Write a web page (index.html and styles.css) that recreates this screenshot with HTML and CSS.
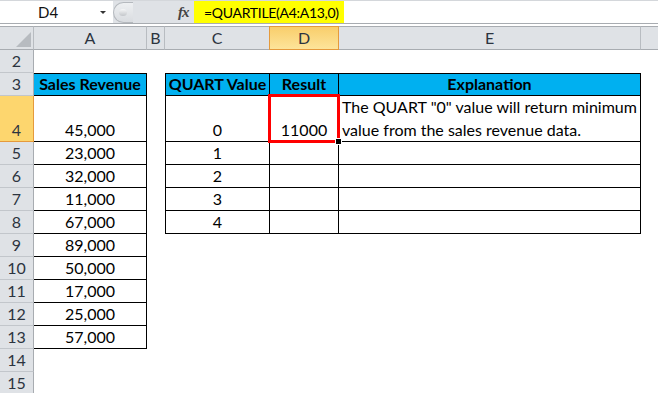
FILE: index.html
```html
<!DOCTYPE html>
<html lang="en">
<head>
  <meta charset="UTF-8" />
  <title>QUARTILE example</title>
  <link rel="stylesheet" href="styles.css">
</head>
<body>
  <div class="formula-bar">
    <div class="name-box">
      <span class="cell-ref">D4</span>
      <span class="drop-arrow"></span>
    </div>
    <div class="fx-zone">
      <span class="grip"><span class="grip-dot"></span></span>
      <span class="fx">fx</span>
    </div>
    <div class="formula">=QUARTILE(A4:A13,0)</div>
    <div class="formula-rest"></div>
  </div>
  <div class="bar-gap"></div>

  <div class="sheet">
    <!-- column headers -->
    <div class="col-head corner"><span class="corner-tri"></span></div>
    <div class="col-head">A</div>
    <div class="col-head">B</div>
    <div class="col-head">C</div>
    <div class="col-head active">D</div>
    <div class="col-head">E</div>
    <div class="col-head last"></div>

    <!-- row 2 -->
    <div class="row-head">2</div>
    <div class="cell"></div><div class="cell"></div><div class="cell"></div>
    <div class="cell"></div><div class="cell"></div><div class="cell"></div>

    <!-- row 3 -->
    <div class="row-head">3</div>
    <div class="cell th bt br bb">Sales Revenue</div>
    <div class="cell"></div>
    <div class="cell th bt bl br bb">QUART Value</div>
    <div class="cell th bt br bb">Result</div>
    <div class="cell th bt br bb">Explanation</div>
    <div class="cell"></div>

    <!-- row 4 -->
    <div class="row-head active">4</div>
    <div class="cell num br bb">45,000</div>
    <div class="cell"></div>
    <div class="cell num bl br bb">0</div>
    <div class="cell num br bb selected">11000</div>
    <div class="cell text br bb">The QUART "0" value will return minimum<br>value from the sales revenue data.</div>
    <div class="cell"></div>

    <div class="row-head">5</div>
    <div class="cell num br bb">23,000</div>
    <div class="cell"></div>
    <div class="cell num bl br bb">1</div>
    <div class="cell br bb"></div>
    <div class="cell br bb"></div>
    <div class="cell"></div>

    <div class="row-head">6</div>
    <div class="cell num br bb">32,000</div>
    <div class="cell"></div>
    <div class="cell num bl br bb">2</div>
    <div class="cell br bb"></div>
    <div class="cell br bb"></div>
    <div class="cell"></div>

    <div class="row-head">7</div>
    <div class="cell num br bb">11,000</div>
    <div class="cell"></div>
    <div class="cell num bl br bb">3</div>
    <div class="cell br bb"></div>
    <div class="cell br bb"></div>
    <div class="cell"></div>

    <div class="row-head">8</div>
    <div class="cell num br bb">67,000</div>
    <div class="cell"></div>
    <div class="cell num bl br bb">4</div>
    <div class="cell br bb"></div>
    <div class="cell br bb"></div>
    <div class="cell"></div>

    <div class="row-head">9</div>
    <div class="cell num br bb">89,000</div>
    <div class="cell"></div><div class="cell"></div><div class="cell"></div><div class="cell"></div><div class="cell"></div>

    <div class="row-head">10</div>
    <div class="cell num br bb">50,000</div>
    <div class="cell"></div><div class="cell"></div><div class="cell"></div><div class="cell"></div><div class="cell"></div>

    <div class="row-head">11</div>
    <div class="cell num br bb">17,000</div>
    <div class="cell"></div><div class="cell"></div><div class="cell"></div><div class="cell"></div><div class="cell"></div>

    <div class="row-head">12</div>
    <div class="cell num br bb">25,000</div>
    <div class="cell"></div><div class="cell"></div><div class="cell"></div><div class="cell"></div><div class="cell"></div>

    <div class="row-head">13</div>
    <div class="cell num br bb">57,000</div>
    <div class="cell"></div><div class="cell"></div><div class="cell"></div><div class="cell"></div><div class="cell"></div>

    <div class="row-head">14</div>
    <div class="cell"></div><div class="cell"></div><div class="cell"></div>
    <div class="cell"></div><div class="cell"></div><div class="cell"></div>

    <div class="row-head">15</div>
    <div class="cell"></div><div class="cell"></div><div class="cell"></div>
    <div class="cell"></div><div class="cell"></div><div class="cell"></div>
  </div>
</body>
</html>
```

FILE: styles.css
```css
* {
  box-sizing: border-box;
}
body {
  margin: 0;
  width: 658px;
  height: 393px;
  overflow: hidden;
  background: #fff;
  font-family: Lato, "Liberation Sans", sans-serif;
  font-size: 16px;
  color: #000;
}

/* formula bar */
.formula-bar {
  display: flex;
  height: 24px;
  border-top: 1px solid #d4d7db;
  border-bottom: 1px solid #a8acb1;
}
.name-box {
  width: 113px;
  flex-shrink: 0;
  display: flex;
  align-items: center;
  background: #fff;
}
.cell-ref {
  margin-left: 38px;
  width: 56px;
  font-size: 15px;
  color: #111;
}
.drop-arrow {
  width: 0;
  height: 0;
  border-left: 3px solid transparent;
  border-right: 3px solid transparent;
  border-top: 3px solid #333;
  margin-left: 6px;
}
.fx-zone {
  width: 81px;
  flex-shrink: 0;
  display: flex;
  align-items: center;
  background: #dfe2e6;
}
.grip {
  width: 20px;
  height: 21px;
  border: 1px solid #b5b9be;
  border-right: none;
  border-radius: 11px 0 0 11px;
  background: linear-gradient(#eef0f2, #d9dce0);
  display: flex;
  align-items: center;
  padding-left: 5px;
}
.grip-dot {
  width: 8px;
  height: 7px;
  border-radius: 50%;
  background: linear-gradient(#f6f7f8, #c3c6ca);
}
.fx {
  margin-left: 45px;
  font-family: "Liberation Serif", serif;
  font-style: italic;
  font-weight: bold;
  font-size: 15px;
  color: #444;
  letter-spacing: -1px;
}
.formula {
  width: 150px;
  flex-shrink: 0;
  background: #ffff00;
  padding-left: 10px;
  font-size: 14px;
  letter-spacing: -0.3px;
  line-height: 23px;
  white-space: nowrap;
}
.formula-rest {
  flex: 1;
  background: #fff;
}
.bar-gap {
  height: 2px;
  background: #fff;
}

/* sheet grid */
.sheet {
  display: grid;
  grid-template-columns: 34px 113px 18px 105px 69px 302px 1fr;
  grid-template-rows: 24px 23px 23px 46px repeat(11, 23px);
}
.col-head {
  background: #dfe2e6;
  border-top: 1px solid #a8acb1;
  border-bottom: 1px solid #a8acb1;
  border-right: 1px solid #b8bcc1;
  color: #2c3440;
  text-align: center;
  line-height: 22px;
}
.col-head.last {
  border-right: none;
}
.col-head.active {
  background: linear-gradient(#f9ce6b, #fde49a);
  border-color: #e59a3c;
  box-shadow: -1px 0 0 #e59a3c;
}
.corner {
  position: relative;
}
.corner-tri {
  position: absolute;
  right: 2px;
  bottom: 2px;
  width: 0;
  height: 0;
  border-left: 15px solid transparent;
  border-bottom: 15px solid #b7bbc0;
}
.row-head {
  background: #dfe2e6;
  border-right: 1px solid #a8acb1;
  border-bottom: 1px solid #c2c6cb;
  color: #2c3440;
  display: flex;
  align-items: flex-end;
  justify-content: center;
  line-height: 22px;
}
.row-head.active {
  background: #fdd66e;
  border-bottom-color: #e59a3c;
  border-right-color: #e59a3c;
}

/* cells */
.cell {
  display: flex;
  align-items: flex-end;
  justify-content: center;
  line-height: 22px;
  white-space: nowrap;
}
.th {
  background: #00b0f0;
  font-weight: bold;
}
.text {
  display: block;
  padding: 0 0 0 3px;
  line-height: 22.5px;
}
.bt { border-top: 1px solid #000; }
.bl { border-left: 1px solid #000; }
.br { border-right: 1px solid #000; }
.bb { border-bottom: 1px solid #000; }

.selected {
  position: relative;
}
.selected::after {
  content: "";
  position: absolute;
  left: -2px;
  top: -2px;
  right: -2px;
  bottom: -2px;
  border: 3px solid #ff0000;
}
.selected::before {
  content: "";
  position: absolute;
  right: -4px;
  bottom: -4px;
  width: 5px;
  height: 5px;
  background: #000;
  border: 1px solid #fff;
  z-index: 1;
}
```
